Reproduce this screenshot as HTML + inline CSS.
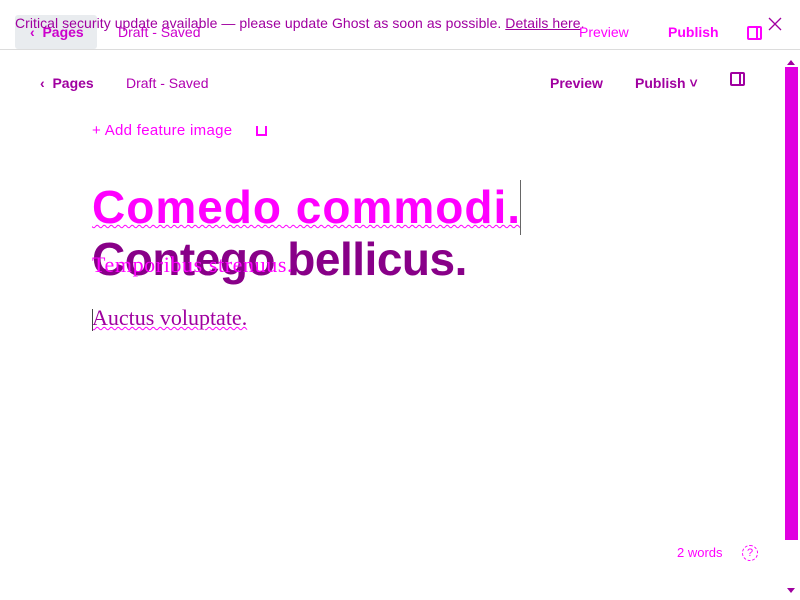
<!DOCTYPE html>
<html><head><meta charset="utf-8"><style>
*{margin:0;padding:0;box-sizing:border-box}
body{width:800px;height:600px;overflow:hidden;background:#fff;font-family:"Liberation Sans",sans-serif;position:relative}
.a{position:absolute;white-space:nowrap}
</style></head><body>
<div class="a" style="left:15px;top:15px;width:82px;height:34px;background:#e9ecef;border-radius:3px"></div>
<div class="a" style="left:0;top:49px;width:800px;height:1px;background:#dcdcdc"></div>
<div class="a" style="left:30px;top:24px;font-size:14px;color:#cc00cc;font-weight:bold">‹&nbsp; Pages</div>
<div class="a" style="left:118px;top:24px;font-size:14px;color:#cc00cc">Draft - Saved</div>
<div class="a" style="left:15px;top:15px;font-size:14px;color:#a000a0;letter-spacing:0.05px">Critical security update available — please update Ghost as soon as possible. <u>Details here</u>.</div>
<div class="a" style="left:579px;top:24px;font-size:14px;color:#ff00ff">Preview</div>
<div class="a" style="left:668px;top:24px;font-size:14px;color:#ff00ff;font-weight:bold">Publish</div>
<div class="a" style="left:747px;top:26px;width:15px;height:14px;border:2px solid #ff00ff;border-radius:2px"><div style="position:absolute;right:2px;top:0;width:2px;height:10px;background:#ff00ff"></div></div>
<svg class="a" style="left:767px;top:16px" width="16" height="16"><path d="M2 2L14 14M14 2L2 14" stroke="#a000a0" stroke-width="1.3"/></svg>

<div class="a" style="left:40px;top:75px;font-size:14px;color:#a000a0;font-weight:bold">‹&nbsp; Pages</div>
<div class="a" style="left:126px;top:75px;font-size:14px;color:#b000b0">Draft - Saved</div>
<div class="a" style="left:550px;top:75px;font-size:14px;color:#a000a0;font-weight:bold">Preview</div>
<div class="a" style="left:635px;top:75px;font-size:14px;color:#a000a0;font-weight:bold">Publish ˅</div>
<div class="a" style="left:730px;top:72px;width:15px;height:14px;border:2px solid #a000a0;border-radius:2px"><div style="position:absolute;right:2px;top:0;width:2px;height:10px;background:#a000a0"></div></div>
<div class="a" style="left:785px;top:67px;width:13px;height:473px;background:#e000e0"></div>
<div class="a" style="left:787px;top:56px;width:0;height:0;border:4px solid transparent;border-bottom:5px solid #a000a0"></div>
<div class="a" style="left:787px;top:588px;width:0;height:0;border:4px solid transparent;border-top:5px solid #a000a0"></div>

<div class="a" style="left:92px;top:122px;font-size:15px;color:#ff00ff;letter-spacing:0.3px">+ Add feature image</div>
<div class="a" style="left:256px;top:126px;width:11px;height:10px;border:2px solid #ff00ff;border-top:none"></div>

<div class="a" style="left:92px;top:180px;font-size:46px;font-weight:bold;color:#ff00ff;letter-spacing:1px;text-decoration:underline wavy #ff00ff 1px">Comedo commodi.</div>
<div class="a" style="left:520px;top:180px;width:1px;height:55px;background:#666"></div>
<div class="a" style="left:92px;top:232px;font-size:46px;font-weight:bold;color:#880088;letter-spacing:-0.5px">Contego bellicus.</div>
<div class="a" style="left:92px;top:252px;font-size:22px;font-family:'Liberation Serif',serif;color:#ff00ff;letter-spacing:0.6px">Temporibus strenuus.</div>
<div class="a" style="left:92px;top:305px;font-size:22px;font-family:'Liberation Serif',serif;color:#a000a0;text-decoration:underline wavy #ff00ff 1px">Auctus voluptate.</div>
<div class="a" style="left:92px;top:309px;width:1px;height:22px;background:#444"></div>

<div class="a" style="left:677px;top:545px;font-size:13px;color:#ff00ff">2 words</div>
<div class="a" style="left:742px;top:545px;width:16px;height:16px;border:1px dashed #ff00ff;border-radius:50%;font-size:11px;color:#ff00ff;text-align:center;line-height:14px">?</div>
</body></html>
